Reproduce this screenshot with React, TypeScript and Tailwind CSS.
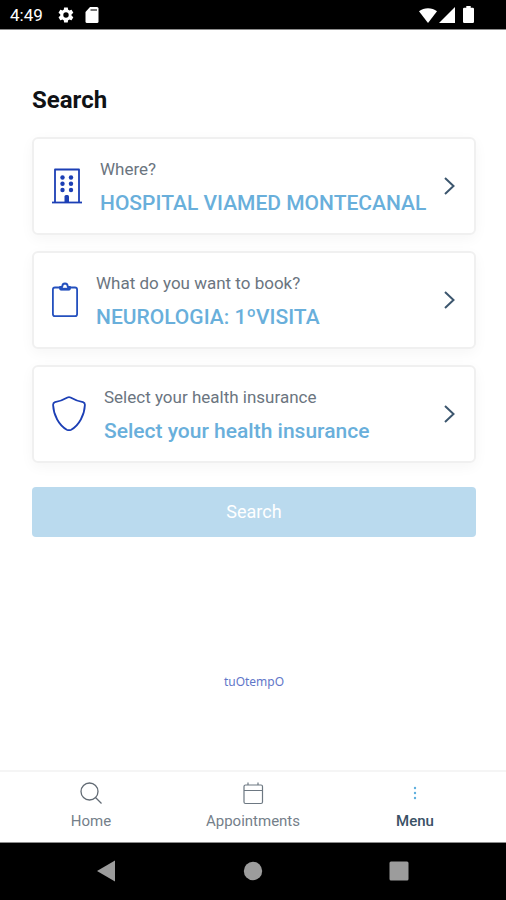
import React from 'react';

const HospitalIcon = () => (
  <svg className="w-[30px] h-9 shrink-0" viewBox="0 0 30 36" fill="none" stroke="#1c3fb5" aria-hidden="true">
    <path d="M3 34V1.5h24V34" strokeWidth="1.8" strokeLinejoin="round" />
    <path d="M0 34.5h30" strokeWidth="1.8" />
    <g fill="#1c3fb5" stroke="none">
      <circle cx="10.5" cy="9.5" r="2.2" />
      <circle cx="19" cy="9.5" r="2.2" />
      <circle cx="10.5" cy="15.800" r="2.2" />
      <circle cx="19" cy="15.800" r="2.2" />
      <circle cx="10.5" cy="22" r="2.2" />
      <circle cx="19" cy="22" r="2.2" />
      <path d="M12.5 34.5v-6q0-1.5 1.5-1.5h1.5q1.5 0 1.5 1.5v6z" />
    </g>
  </svg>
);

const ClipboardIcon = () => (
  <svg className="w-[26px] h-9 shrink-0" viewBox="0 0 26 36" fill="none" stroke="#2450be" strokeWidth="1.8" aria-hidden="true">
    <path d="M8 5.5H3Q.9 5.5 .9 7.500v24.500q0 2.200 2 2.200h20.200q2 0 2-2.200V7.500q0-2-2.100-2H18" />
    <path d="M8 5v1.500q0 1.200 1.200 1.200h7.600q1.200 0 1.200-1.200V5h-2.200C15.800 .3 10.200 .3 10.200 5z" strokeLinejoin="round" />
    <path d="M8 7h10" strokeWidth="2.4" />
  </svg>
);

const ShieldIcon = () => (
  <svg className="w-[34px] h-9 shrink-0" viewBox="0 0 34 36" fill="none" stroke="#1c3fb5" strokeWidth="1.8" strokeLinejoin="round" aria-hidden="true">
    <path d="M15.500 1.500Q17 .7 18.500 1.500C22.500 3.800 26 5.200 31 6.200Q33 6.800 32.900 9C32.500 19 27 29.500 19.200 33.700Q17 34.700 14.800 33.700C7 29.500 1.500 19 1.100 9Q1 6.800 3 6.200C8 5.200 11.500 3.800 15.500 1.500z" />
  </svg>
);

const ChevronIcon = () => (
  <svg className="w-3 h-[18px] shrink-0" viewBox="0 0 12 18" fill="none" stroke="#3c566e" strokeWidth="2" aria-hidden="true">
    <path d="M1 1l8.500 8L1 17" />
  </svg>
);

const fields = [
  { label: 'Where?', value: 'HOSPITAL VIAMED MONTECANAL', icon: <HospitalIcon /> },
  { label: 'What do you want to book?', value: 'NEUROLOGIA: 1ºVISITA', icon: <ClipboardIcon /> },
  { label: 'Select your health insurance', value: 'Select your health insurance', icon: <ShieldIcon /> },
];

function StatusBar() {
  return (
    <div className="h-[30px] shrink-0 bg-black text-white border-b border-[#8c8c8c] flex items-center justify-between pl-[10px] pr-8">
      <div className="flex items-center">
        <span className="text-[17px] leading-5">4:49</span>
        <svg className="w-[18px] h-[18px] ml-[14px]" viewBox="0 0 24 24" fill="currentColor" aria-hidden="true">
          <path d="M19.400 13a7.500 7.500 0 0 0 0-2l2.100-1.600c.2-.2.3-.5.1-.7l-2-3.500c-.1-.2-.4-.3-.6-.2l-2.500 1a7.300 7.300 0 0 0-1.700-1l-.4-2.600c0-.3-.2-.4-.5-.4h-4c-.3 0-.5.2-.5.4L9 5c-.6.3-1.200.6-1.700 1l-2.500-1c-.2-.1-.5 0-.6.2l-2 3.500c-.1.2-.1.5.1.7L4.400 11a7.500 7.500 0 0 0 0 2l-2.100 1.600c-.2.2-.2.500-.1.700l2 3.500c.1.2.4.3.6.2l2.500-1c.5.4 1.100.7 1.700 1l.4 2.600c0 .3.2.4.5.4h4c.3 0 .5-.2.5-.4l.4-2.600c.6-.3 1.200-.6 1.700-1l2.500 1c.2.1.5 0 .6-.2l2-3.500c.1-.2.1-.5-.1-.7zM12 15.600a3.600 3.600 0 1 1 0-7.200 3.600 3.600 0 0 1 0 7.200z" />
        </svg>
        <svg className="w-[14px] h-4 ml-[10px]" viewBox="0 0 14 16" aria-hidden="true">
          <path d="M5 0h7q1.500 0 1.500 1.500v13q0 1.500-1.500 1.500H2Q.5 16 .5 14.500V5z" fill="currentColor" />
          <path d="M5.500 3h6.500" stroke="#777" strokeWidth="2" />
        </svg>
      </div>
      <div className="flex items-center">
        <svg className="w-[18px] h-4" viewBox="0 0 18 16" fill="currentColor" aria-hidden="true">
          <path d="M9 16L0 4.300C5 .1 13 .1 18 4.300z" />
        </svg>
        <svg className="w-4 h-4 ml-[2px]" viewBox="0 0 16 16" fill="currentColor" aria-hidden="true">
          <path d="M16 0v16H0z" />
        </svg>
        <svg className="w-[11px] h-[17px] ml-2" viewBox="0 0 11 17" fill="currentColor" aria-hidden="true">
          <path d="M3.300 0h4.400v1.700h2.100q1.200 0 1.200 1.200v12.900q0 1.200-1.200 1.200H1.200Q0 17 0 15.800V2.900q0-1.200 1.200-1.200h2.100z" />
        </svg>
      </div>
    </div>
  );
}

function TabBar() {
  return (
    <nav className="h-[73px] shrink-0 bg-white border-t-2 border-[#f5f5f5] border-b border-b-[#8c8c8c] grid grid-cols-3 px-[10px] text-[15px] leading-5 text-[#75808a]">
      <a href="#home" className="flex flex-col items-center pt-[9px] gap-[6px]">
        <svg className="w-6 h-6" viewBox="0 0 24 24" fill="none" stroke="#626b74" strokeWidth="1.300" aria-hidden="true">
          <circle cx="10.500" cy="10.500" r="8.500" />
          <path d="M16.500 16.500l6 6" />
        </svg>
        Home
      </a>
      <a href="#appointments" className="flex flex-col items-center pt-[9px] gap-[6px]">
        <svg className="w-6 h-6" viewBox="0 0 24 24" fill="none" stroke="#6d7882" strokeWidth="1.200" aria-hidden="true">
          <rect x="3" y="4" width="18.500" height="18.500" rx="1.500" />
          <path d="M3 9.500h18.500M7 1.500V4M17 1.500V4" />
        </svg>
        Appointments
      </a>
      <a href="#menu" className="flex flex-col items-center pt-[9px] gap-[6px] font-medium text-[#3a5166]">
        <svg className="w-6 h-6" viewBox="0 0 24 24" fill="#5fb0de" aria-hidden="true">
          <circle cx="12" cy="7" r="1.200" />
          <circle cx="12" cy="12" r="1.200" />
          <circle cx="12" cy="17" r="1.200" />
        </svg>
        Menu
      </a>
    </nav>
  );
}

function SystemNav() {
  return (
    <div className="h-[57px] shrink-0 bg-black flex items-center justify-between pl-24 pr-[97px] pb-[2px] text-[#9c9c9c]">
      <button type="button" aria-label="Back">
        <svg className="w-5 h-[22px]" viewBox="0 0 20 22" fill="currentColor">
          <path d="M19 .5v21L1 11z" />
        </svg>
      </button>
      <button type="button" aria-label="Home screen">
        <svg className="w-5 h-5" viewBox="0 0 20 20" fill="currentColor">
          <circle cx="10" cy="10" r="9.200" />
        </svg>
      </button>
      <button type="button" aria-label="Recent apps">
        <svg className="w-5 h-5" viewBox="0 0 20 20" fill="currentColor">
          <rect x=".5" y=".5" width="19" height="19" rx="1.500" />
        </svg>
      </button>
    </div>
  );
}

export default function App() {
  return (
    <div className="min-h-screen flex flex-col bg-white font-[Roboto,sans-serif]">
      <StatusBar />

      <main className="flex-1 flex flex-col pl-8 pr-[30px] pt-[54px]">
        <h1 className="text-2xl leading-8 font-bold text-[#101215]">Search</h1>

        <div className="mt-[21px] flex flex-col gap-4">
          {fields.map((field) => (
            <button
              key={field.label}
              type="button"
              className="w-full flex items-center text-left bg-white border-2 border-[#f0f0f0] rounded-md shadow-[0_4px_14px_rgba(0,0,0,0.04)] px-[18px] py-4"
            >
              {field.icon}
              <span className="ml-[18px] flex-1 min-w-0 flex flex-col gap-[6px] whitespace-nowrap">
                <span className="text-[17px] leading-7 text-[#6b757f]">{field.label}</span>
                <span className="text-[21px] leading-7 font-medium text-[#69afdb]">{field.value}</span>
              </span>
              <ChevronIcon />
            </button>
          ))}
        </div>

        <button type="button" className="mt-6 h-[50px] w-full rounded-sm bg-[#badaee] text-lg text-white">
          Search
        </button>

        <p className="mt-auto mb-[78px] text-center text-xs leading-5 text-[#5f77c9] font-['Noto_Sans',sans-serif]">
          tuOtempO
        </p>
      </main>

      <TabBar />
      <SystemNav />
    </div>
  );
}
